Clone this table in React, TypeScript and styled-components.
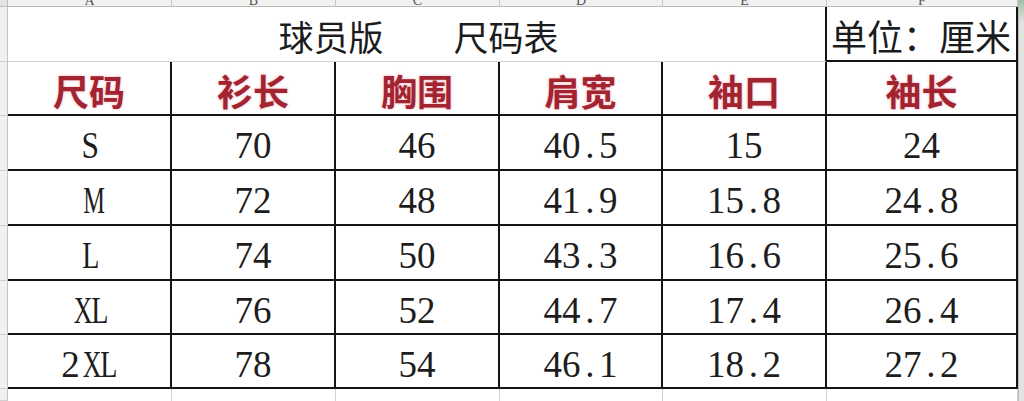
import React from 'react';
import styled, { createGlobalStyle } from 'styled-components';

const INK = '#151515';
const GRID = '#d2d2d2';

const GlobalStyle = createGlobalStyle`
  html, body {
    margin: 0;
    padding: 0;
    background: #fff;
  }
  body {
    width: 1024px;
    height: 401px;
    overflow: hidden;
  }
`;

const Sheet = styled.div`
  display: grid;
  grid-template-columns: 8px 164px 164px 164px 163px 164px 191px 6px;
  grid-template-rows: 7px 55px 54px 55px 55px 55px 54px 54px 12px;
  width: 1024px;
  height: 401px;
  background: #fff;
`;

const Corner = styled.div`
  background: #e4e4e4;
  border-right: 1px solid #bcbcbc;
  border-bottom: 1px solid #bcbcbc;
`;

const ColHead = styled.div`
  display: flex;
  align-items: flex-end;
  justify-content: center;
  overflow: hidden;
  background: #f1f1f1;
  border-right: 1px solid #c8c8c8;
  border-bottom: 1px solid #bcbcbc;
  font: 14px/14px 'Liberation Serif', serif;
  color: #555;

  span {
    margin-bottom: -2px;
  }
`;

const RowHead = styled.div`
  background: #f0f0f0;
  border-right: 1px solid #c4c4c4;
  border-bottom: 1px solid #d0d0d0;
`;

const Edge = styled.div`
  grid-column: 8;
  grid-row: 1 / span 9;
  background: linear-gradient(#9cc2a4 0, #c9d6cb 14px, #e2e4e2 24px);
  border-left: 1px solid #b9b9b9;
`;

const TitleCell = styled.div`
  grid-column: span 5;
  display: flex;
  align-items: center;
  justify-content: center;
  padding: 3px 0 0 4px;
  box-sizing: border-box;
  border-right: 2px solid ${INK};
  border-bottom: 1px solid ${GRID};
  font: 35px/1 'Noto Sans CJK SC', sans-serif;
  color: #1c1c1c;
  white-space: pre;
`;

const UnitCell = styled.div`
  display: flex;
  align-items: center;
  padding: 3px 0 0 4px;
  box-sizing: border-box;
  overflow: hidden;
  border-right: 2px solid ${INK};
  border-bottom: 2px solid ${INK};
  font: 36px/1 'Noto Sans CJK SC', sans-serif;
  color: #1c1c1c;
  white-space: nowrap;
`;

const HeadCell = styled.div`
  display: flex;
  align-items: center;
  justify-content: center;
  padding-top: 3px;
  box-sizing: border-box;
  border-right: 2px solid ${INK};
  border-bottom: 2px solid ${INK};
  font: 700 36px/1 'Noto Sans CJK SC', sans-serif;
  color: #a12430;
  text-shadow: 0 0 3px rgba(232, 110, 130, 0.55);
`;

const DataCell = styled.div`
  display: flex;
  align-items: center;
  justify-content: center;
  padding-top: 6px;
  box-sizing: border-box;
  border-right: 2px solid ${INK};
  border-bottom: 2px solid ${INK};
  font: 37px/37px 'Liberation Serif', 'DejaVu Serif', serif;
  color: #1d1d1d;
`;

const Glyph = styled.span<{ $sx: number }>`
  display: inline-block;
  width: 18.5px;
  text-align: center;
  transform: scaleX(${p => p.$sx});
`;

const TailCell = styled.div`
  border-right: 1px solid ${GRID};
`;

// half-width cells, the way the sheet's font sets latin text
const narrow: Record<string, number> = { M: 0.66, X: 0.7, L: 0.76, S: 0.85 };

const Mono = ({ text }: { text: string }) => (
  <>
    {text.split('').map((ch, i) => (
      <Glyph key={i} $sx={narrow[ch] ?? 1}>
        {ch}
      </Glyph>
    ))}
  </>
);

const letters = ['A', 'B', 'C', 'D', 'E', 'F'];
const heads = ['尺码', '衫长', '胸围', '肩宽', '袖口', '袖长'];
const rows = [
  ['S', '70', '46', '40.5', '15', '24'],
  ['M', '72', '48', '41.9', '15.8', '24.8'],
  ['L', '74', '50', '43.3', '16.6', '25.6'],
  ['XL', '76', '52', '44.7', '17.4', '26.4'],
  ['2XL', '78', '54', '46.1', '18.2', '27.2'],
];

const App = () => {
  return (
    <>
      <GlobalStyle />
      <Sheet>
        <Edge />
        <Corner />
        {letters.map(l => (
          <ColHead key={l}>
            <span>{l}</span>
          </ColHead>
        ))}

        <RowHead />
        <TitleCell>{'球员版\u3000\u3000尺码表'}</TitleCell>
        <UnitCell>单位：厘米</UnitCell>

        <RowHead />
        {heads.map(h => (
          <HeadCell key={h}>{h}</HeadCell>
        ))}

        {rows.map(r => (
          <React.Fragment key={r[0]}>
            <RowHead />
            {r.map((v, i) => (
              <DataCell key={i}>
                <Mono text={v} />
              </DataCell>
            ))}
          </React.Fragment>
        ))}

        <RowHead />
        {letters.map(l => (
          <TailCell key={l} />
        ))}
      </Sheet>
    </>
  );
};

export default App;
